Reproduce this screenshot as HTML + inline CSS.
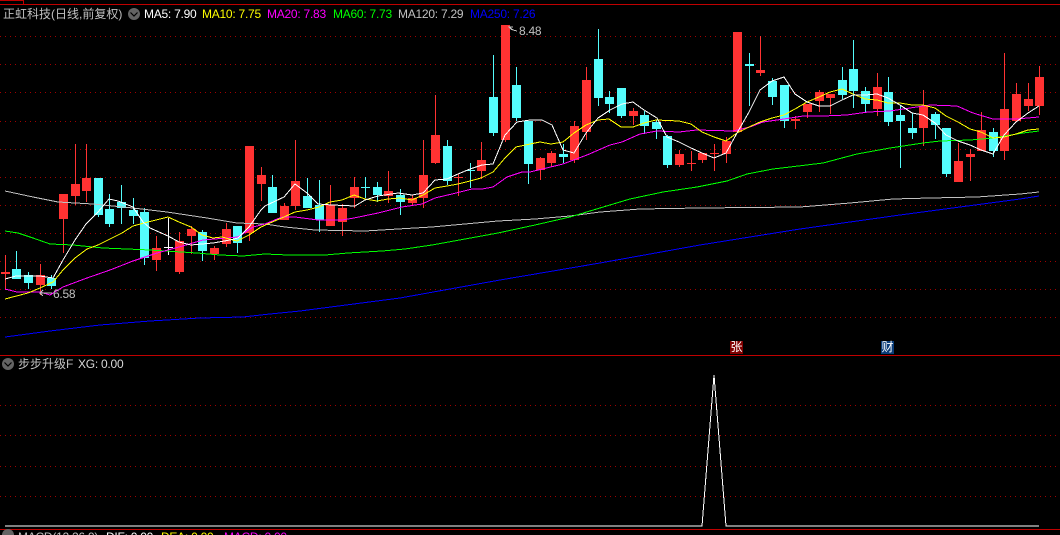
<!DOCTYPE html>
<html><head><meta charset="utf-8"><style>
html,body{margin:0;padding:0;background:#000;width:1060px;height:535px;overflow:hidden}
#w{position:relative;width:1060px;height:535px;overflow:hidden;background:#000;font:12px/14px "Liberation Sans","WenQuanYi Zen Hei","Noto Sans CJK SC",sans-serif}
#w span{position:absolute;white-space:nowrap}
#w span.l{letter-spacing:-.25px}
svg{position:absolute;left:0;top:0}
.b{width:13px;height:13px;text-align:center;color:#fff;line-height:13px}
</style></head><body><div id="w">
<svg width="1060" height="535" viewBox="0 0 1060 535" fill="none" shape-rendering="crispEdges">
<path stroke="#a00000" stroke-dasharray="1 4" d="M0 36.5H1060M0 64.5H1060M0 92.5H1060M0 121.5H1060M0 149.5H1060M0 177.5H1060M0 205.5H1060M0 233.5H1060M0 261.5H1060M0 289.5H1060M0 317.5H1060M0 405.5H1060M0 435.5H1060M0 466.5H1060M0 496.5H1060"/>
<path stroke="#c00000" d="M0 4.5H1060M23.5 0V4M0 355.5H1060M0 529.5H1060M0 .5H23"/>
<path stroke="#ff3232" d="M5.5 255V290M40.5 264V295M63.5 194V253M75.5 144V205M86.5 144V202M156.5 236V271M179.5 232V274M191.5 226V254M214.5 246V260M226.5 223V247M249.5 146V241M261.5 167V201M284.5 203V220M295.5 140V210M330.5 185V226M342.5 204V236M354.5 177V208M388.5 171V203M412.5 195V206M423.5 140V208M435.5 95V164M458.5 174V196M481.5 142V179M505.5 25V142M540.5 157V180M551.5 151V167M574.5 121V163M586.5 67V140M633.5 108V125M679.5 150V167M691.5 151V171M702.5 153V163M714.5 144V171M726.5 137V163M737.5 32V132M760.5 36V76M795.5 116V129M807.5 104V118M819.5 90V112M830.5 94V114M877.5 73V116M923.5 90V146M958.5 143V182M970.5 149V181M981.5 112V151M1004.5 53V160M1016.5 83V121M1028.5 83V111M1039.5 66V115"/>
<path fill="#ff3232" d="M1 272h9v2h-9zM36 275h9v10h-9zM59 194h9v25h-9zM71 184h9v12h-9zM82 178h9v13h-9zM152 248h9v12h-9zM175 241h9v31h-9zM187 229h9v7h-9zM210 248h9v6h-9zM222 229h9v15h-9zM245 146h9v87h-9zM257 175h9v9h-9zM280 206h9v14h-9zM291 181h9v25h-9zM326 205h9v21h-9zM338 208h9v14h-9zM350 187h9v11h-9zM384 191h9v5h-9zM408 198h9v5h-9zM419 175h9v23h-9zM431 135h9v28h-9zM454 177h9v1h-9zM477 160h9v11h-9zM501 25h9v115h-9zM536 158h9v12h-9zM547 153h9v10h-9zM570 126h9v34h-9zM582 80h9v52h-9zM629 111h9v5h-9zM675 154h9v11h-9zM687 163h9v1h-9zM698 153h9v7h-9zM710 153h9v1h-9zM722 141h9v13h-9zM733 32h9v100h-9zM756 70h9v3h-9zM791 119h9v2h-9zM803 104h9v8h-9zM815 92h9v9h-9zM826 94h9v4h-9zM873 87h9v22h-9zM919 106h9v22h-9zM954 161h9v21h-9zM966 154h9v3h-9zM977 130h9v21h-9zM1000 109h9v42h-9zM1012 94h9v27h-9zM1024 99h9v7h-9zM1035 77h9v29h-9z"/>
<path stroke="#54fcfc" d="M16.500 251V279M28.500 272V289M51.500 275V289M98.500 178V217M109.500 194V227M121.500 185V224M133.500 198V224M144.500 208V265M202.500 230V261M237.500 226V253M272.500 175V213M307.500 178V208M319.500 180V232M365.500 177V198M377.500 182V202M400.500 189V215M447.500 140V185M470.500 163V188M493.500 55V136M516.500 67V121M528.500 121V184M563.500 144V163M598.500 29V106M609.500 91V113M621.500 88V118M644.500 111V134M656.500 120V139M667.500 135V168M749.500 53V106M772.500 78V105M784.500 85V128M842.500 67V99M853.500 40V108M865.500 87V112M888.500 77V126M900.500 105V168M912.500 113V139M935.500 112V139M946.500 128V177M993.500 128V157"/>
<path fill="#54fcfc" d="M12 269h9v10h-9zM24 275h9v8h-9zM47 278h9v8h-9zM94 178h9v37h-9zM105 209h9v15h-9zM117 202h9v6h-9zM129 210h9v6h-9zM140 212h9v46h-9zM198 232h9v19h-9zM233 226h9v17h-9zM268 187h9v26h-9zM303 196h9v12h-9zM315 205h9v15h-9zM361 187h9v1h-9zM373 187h9v8h-9zM396 195h9v7h-9zM443 146h9v35h-9zM466 170h9v1h-9zM489 97h9v36h-9zM512 85h9v33h-9zM524 121h9v43h-9zM559 154h9v3h-9zM594 59h9v39h-9zM605 97h9v7h-9zM617 88h9v28h-9zM640 115h9v11h-9zM652 122h9v7h-9zM663 136h9v29h-9zM745 64h9v2h-9zM768 81h9v16h-9zM780 85h9v36h-9zM838 80h9v15h-9zM849 69h9v22h-9zM861 91h9v13h-9zM884 92h9v30h-9zM896 115h9v6h-9zM908 128h9v5h-9zM931 114h9v11h-9zM942 128h9v46h-9zM989 132h9v19h-9z"/>
<path stroke="#fff" d="M168.500 218V255M164 247.500h9"/>
<polyline stroke="#0000ff" points="5,337 50,331 100,325 150,321 200,318 243,317 270,314 300,311 400,298 500,280 600,263 700,245 800,229 900,215 1020,199 1039,196"/>
<polyline stroke="#c0c0c0" points="5,191 33,197 58,202 93,204 133,208 167,212 207,218 237,223 265,224 285,227 315,230 365,231 398,229 432,227 465,224 498,221 535,219 570,216 600,212 640,209 700,208 800,207 850,203 893,199 930,198 977,197 1020,194 1039,192"/>
<polyline stroke="#00ff00" points="5,231 18,233 33,238 50,244 73,245 103,248 127,249 150,250 197,253 220,255 243,256 265,254 288,255 325,255 348,253 382,251 405,249 432,245 465,239 498,233 535,225 570,217 600,208 630,199 663,192 697,187 727,181 747,174 773,169 790,167 823,163 857,154 890,148 923,143 940,141 970,140 993,138 1023,133 1039,131"/>
<polyline stroke="#ff00ff" points="5,289 17,292 40,292 50,295 63,287 87,278 110,270 133,261 157,253 179,247 203,240 238,237 253,227 265,224 282,217 295,217 318,220 342,220 354,218 378,213 402,207 422,204 435,198 452,194 472,189 482,189 493,187 507,177 522,172 530,172 563,164 587,155 610,145 622,142 640,134 657,131 679,132 697,130 733,131 750,127 763,122 784,119 803,116 823,116 847,115 868,112 890,111 910,108 930,105 957,106 973,113 993,119 1017,119 1039,117"/>
<polyline stroke="#ffff00" points="5,299 28,293 40,288 53,282 63,270 75,258 87,249 98,245 110,239 122,233 133,226 144,223 168,217 179,222 191,227 202,235 213,238 222,237 237,241 249,235 261,227 270,223 284,217 295,212 307,210 319,207 330,202 342,200 354,195 365,199 377,201 388,199 400,198 412,200 423,195 435,188 447,186 458,184 470,181 481,178 493,172 505,158 516,147 530,144 540,142 551,144 563,142 574,133 586,125 598,120 609,119 621,127 633,127 644,123 656,120 679,121 691,124 702,132 714,137 726,141 737,133 749,127 760,122 772,118 784,115 795,109 807,102 819,97 830,92 842,89 853,94 865,99 877,100 888,103 900,103 912,105 923,105 935,108 946,116 958,122 970,129 981,132 993,138 1004,137 1016,134 1028,130 1039,129"/>
<polyline stroke="#ffffff" points="5,279 16,276 40,276 53,278 63,260 75,240 86,224 98,212 109,199 118,201 133,207 143,222 150,228 168,236 179,242 191,245 213,243 230,240 238,238 249,227 261,210 265,206 284,197 295,184 307,193 318,204 332,205 355,206 365,200 378,196 398,193 412,195 423,193 435,180 447,179 458,174 470,169 482,165 493,164 505,135 517,122 530,120 542,120 552,125 563,150 574,153 586,133 598,118 610,110 622,104 633,102 644,110 657,118 667,137 679,142 691,148 702,153 714,158 726,153 737,133 749,112 760,90 772,81 784,77 795,94 807,102 819,106 830,106 842,100 853,95 865,95 877,94 888,98 900,105 912,113 923,115 935,123 946,135 958,141 970,145 981,150 993,154 1004,135 1016,122 1028,113 1039,106"/>
<polyline stroke="#fff" points="5,526 702,526 714,375 726,526 1039,526"/>
<path stroke="#c0c0c0" d="M517 31l-4-1-4-3h4M509 27l3 3M52 293H40l3-3M40 293l3 3"/>
<g shape-rendering="auto">
<circle cx="134" cy="14" r="6" fill="#646464"/><path d="M130.500 12.500L134 16l3.500-3.500" stroke="#000" stroke-width="1.200"/>
<circle cx="8" cy="364" r="6" fill="#646464"/><path d="M4.500 362.500L8 366l3.500-3.500" stroke="#000" stroke-width="1.200"/>
<circle cx="8" cy="535" r="6" fill="#646464"/>
</g>
</svg>
<span style="left:3px;top:7px;color:#c0c0c0">正虹科技(日线,前复权)</span>
<span class="l" style="left:144px;top:7px;color:#fff">MA5: 7.90</span>
<span class="l" style="left:202px;top:7px;color:#ff0">MA10: 7.75</span>
<span class="l" style="left:267px;top:7px;color:#f0f">MA20: 7.83</span>
<span class="l" style="left:333px;top:7px;color:#0f0">MA60: 7.73</span>
<span class="l" style="left:398px;top:7px;color:#c0c0c0">MA120: 7.29</span>
<span class="l" style="left:470px;top:7px;color:#00f">MA250: 7.26</span>
<span class="l" style="left:519px;top:24px;color:#c0c0c0">8.48</span>
<span class="l" style="left:53px;top:287px;color:#c0c0c0">6.58</span>
<span class="b" style="left:730px;top:341px;background:#800000">张</span>
<span class="b" style="left:881px;top:341px;background:#0a3c78">财</span>
<span style="left:18px;top:357px;color:#c0c0c0">步步升级F</span>
<span class="l" style="left:78px;top:357px;color:#d8d8d8">XG: 0.00</span>
<span class="l" style="left:18px;top:530px;color:#c0c0c0">MACD(12,26,9)</span>
<span class="l" style="left:106px;top:530px;color:#fff">DIF: 0.00</span>
<span class="l" style="left:161px;top:530px;color:#ff0">DEA: 0.00</span>
<span class="l" style="left:224px;top:530px;color:#f0f">MACD: 0.00</span>
</div></body></html>
